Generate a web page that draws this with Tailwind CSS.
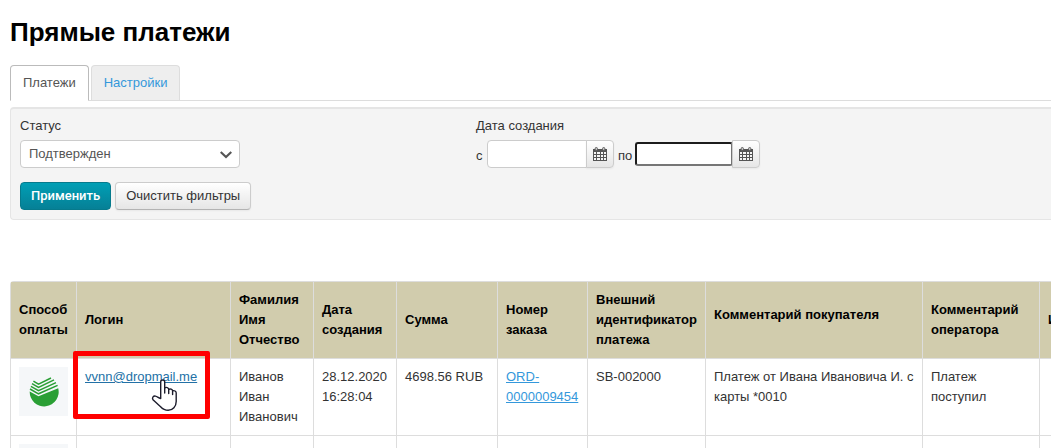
<!DOCTYPE html>
<html lang="ru">
<head>
    <meta charset="UTF-8">
    <meta name="viewport" content="width=device-width, initial-scale=1.0">
    <title>Прямые платежи</title>
    <script src="https://cdn.jsdelivr.net/npm/@tailwindcss/browser@4"></script>
</head>
<body class="bg-white pl-[10px] overflow-x-hidden font-['Liberation_Sans',Arial,sans-serif] text-[13px] leading-5 text-[#333]">

<!-- Icons -->
<svg class="hidden">
    <symbol id="calendar" viewBox="0 0 14 14">
        <path fill="#555" d="M0 2h14v12H0z"/>
        <path fill="#f6f6f6" d="M1 5h2v2H1zM4 5h3v2H4zM8 5h2v2H8zM11 5h2v2h-2zM1 8h2v2H1zM4 8h3v2H4zM8 8h2v2H8zM11 8h2v2h-2zM1 11h2v2H1zM4 11h3v2H4zM8 11h2v2H8zM11 11h2v2h-2z"/>
        <rect x="2.2" y="0.5" width="2.2" height="3" rx="1" fill="#ccc" stroke="#555" stroke-width=".9"/>
        <rect x="9.6" y="0.5" width="2.2" height="3" rx="1" fill="#ccc" stroke="#555" stroke-width=".9"/>
    </symbol>
</svg>

<h1 class="pt-4 text-[26px] leading-8 font-bold text-black">Прямые платежи</h1>

<!-- Tabs -->
<nav class="mt-[17px] flex gap-[2px] border-b border-[#ddd]">
    <a href="#" class="-mb-px h-9 rounded-t border border-[#bbb] border-b-white bg-white px-3 py-[7px] text-[#555]">Платежи</a>
    <a href="#" class="h-[35px] rounded-t border border-b-0 border-[#ddd] bg-[#eee] px-3 py-[7px] text-[#3498db]">Настройки</a>
</nav>

<!-- Filters -->
<form class="mt-[6px] rounded-l border border-t-2 border-r-0 border-[#e5e5e5] bg-[#f4f4f4] px-[9px] pt-[7px] pb-[9px]">
    <div class="grid grid-cols-[456px_1fr]">
        <div>
            <label for="status" class="block">Статус</label>
            <div class="relative mt-1 w-[220px]">
                <select id="status" class="block h-7 w-full appearance-none rounded border border-[#ccc] bg-white px-2 text-[#555]">
                    <option>Подтвержден</option>
                </select>
                <svg class="pointer-events-none absolute top-[11px] right-2 h-2 w-3" viewBox="0 0 12 8" fill="none" stroke="#555" stroke-width="2.2">
                    <path d="M.7 1L6 6 11.3 1"/>
                </svg>
            </div>
        </div>
        <div>
            <div>Дата создания</div>
            <div class="mt-1 flex items-center">
                <label for="dateFrom" class="w-[11px] pt-1">с</label>
                <input id="dateFrom" type="text" class="h-7 w-[100px] rounded-l border border-[#ccc] bg-white px-1">
                <button type="button" aria-label="Выбрать дату" class="-ml-px flex h-7 w-7 items-center justify-center rounded-r border border-[#ccc] bg-linear-to-b from-white to-[#e6e6e6] shadow-xs">
                    <svg class="size-[14px]"><use href="#calendar"/></svg>
                </button>
                <label for="dateTo" class="ml-1 w-[17px] pt-1">по</label>
                <input id="dateTo" type="text" class="h-6 w-[98px] rounded-[3px] border-2 border-t-[#1c1c1c] border-l-[#1c1c1c] border-r-[#767676] border-b-[#767676] bg-white px-1">
                <button type="button" aria-label="Выбрать дату" class="-ml-px flex h-7 w-7 items-center justify-center rounded-r border border-[#ccc] bg-linear-to-b from-white to-[#e6e6e6] shadow-xs">
                    <svg class="size-[14px]"><use href="#calendar"/></svg>
                </button>
            </div>
        </div>
    </div>
    <div class="mt-[14px] flex gap-1">
        <button type="submit" class="h-7 rounded border border-[#067a8c] bg-linear-to-b from-[#009fb5] to-[#068096] px-[10px] font-[Roboto,sans-serif] font-medium text-white">Применить</button>
        <button type="button" class="h-7 rounded border border-[#ccc] border-b-[#b3b3b3] bg-linear-to-b from-white to-[#e6e6e6] px-[10px] shadow-xs">Очистить фильтры</button>
    </div>
</form>

<!-- Payments -->
<div class="mt-[61px] overflow-hidden rounded-tl">
    <table class="w-[1110px] table-fixed border-collapse [&_td]:border [&_td]:border-[#ddd] [&_td]:p-2 [&_td]:align-top [&_th]:border [&_th]:border-[#ddd] [&_th]:p-2 [&_th]:text-left [&_th]:align-middle">
        <colgroup>
            <col class="w-[66px]">
            <col class="w-[154px]">
            <col class="w-[83px]">
            <col class="w-[83px]">
            <col class="w-[101px]">
            <col class="w-[90px]">
            <col class="w-[118px]">
            <col class="w-[217px]">
            <col class="w-[117px]">
            <col>
        </colgroup>
        <thead class="bg-[#d1ccad] text-black">
            <tr>
                <th>Способ оплаты</th>
                <th>Логин</th>
                <th>Фамилия Имя Отчество</th>
                <th>Дата создания</th>
                <th>Сумма</th>
                <th>Номер заказа</th>
                <th class="whitespace-nowrap">Внешний<br>идентификатор<br>платежа</th>
                <th><div class="pb-[10px] whitespace-nowrap">Комментарий покупателя</div></th>
                <th>Комментарий оператора</th>
                <th>И</th>
            </tr>
        </thead>
        <tbody>
            <tr>
                <td>
                    <div class="flex size-[49px] items-center justify-center bg-[#f5f7f9]">
                        <svg class="size-[30px]" viewBox="0 0 30 30">
                            <path fill="#2a9f35" d="M.7 14.5L9.5 19.3 29.2 11.2A14.5 14.5 0 1 1 .7 14.5z"/>
                            <path fill="none" stroke="#2a9f35" stroke-width="1.5" d="M1 12L9.500 16.800 28.600 8.400M1.900 9.300L9.500 13.600 27 5.600M3 6.600L9.500 10.400 25 2.800M4.400 4.200L9.500 7.200 22 1"/>
                        </svg>
                    </div>
                </td>
                <td>
                    <div class="relative">
                        <a href="#" class="text-[#2371a6] underline">vvnn@dropmail.me</a>
                        <div class="pointer-events-none absolute -top-4 -left-3 h-[68px] w-[137px] rounded-xs border-5 border-[#f00]"></div>
                        <svg class="pointer-events-none absolute top-3 left-[66px] h-8 w-[27px]" viewBox="0 0 27 32">
                            <path fill="#fff" stroke="#1c1c2c" stroke-width="1.4" stroke-linejoin="round" stroke-linecap="round" d="M9.7 19.5V3c0-2.6 4-2.6 4 0V8.8c1.6-.8 4-.3 4 1.5 1.5-.7 3.9-.2 3.9 1.5 1.8-.5 3.6.3 3.6 2.2v8.500c0 5-3.400 8.800-8 8.800-3.500 0-5.500-1.300-7.600-3.600L2 20.800c-1.400-2.200.6-4.300 2.600-3.600 1.700.5 3 2 5.100 2.300"/>
                            <path fill="none" stroke="#1c1c2c" stroke-width="1.4" stroke-linecap="round" d="M13.700 8.800V14M17.700 10.300V14.500M21.600 11.800V15.500"/>
                        </svg>
                    </div>
                </td>
                <td>Иванов Иван Иванович</td>
                <td>28.12.2020 16:28:04</td>
                <td>4698.56 RUB</td>
                <td><a href="#" class="text-[#3498db] underline">ORD-0000009454</a></td>
                <td>SB-002000</td>
                <td>Платеж от Ивана Ивановича И. с карты *0010</td>
                <td>Платеж поступил</td>
                <td></td>
            </tr>
            <tr>
                <td><div class="size-[49px] bg-[#f5f7f9]"></div></td>
                <td></td>
                <td></td>
                <td></td>
                <td></td>
                <td></td>
                <td></td>
                <td></td>
                <td></td>
                <td></td>
            </tr>
        </tbody>
    </table>
</div>

</body>
</html>
